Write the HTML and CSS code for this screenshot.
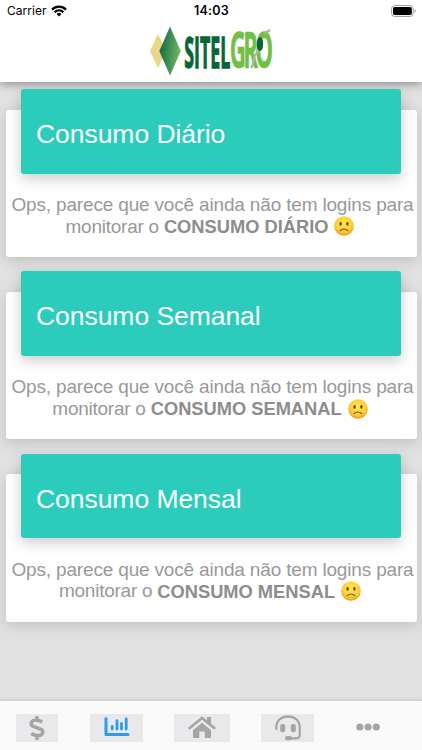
FILE: index.html
```html
<!DOCTYPE html>
<html lang="pt-BR">
<head>
<meta charset="utf-8">
<meta name="viewport" content="width=device-width, initial-scale=1">
<title>SITELGRO</title>
<link rel="stylesheet" href="styles.css">
</head>
<body>
<div class="app">
  <header class="header">
    <div class="status">
      <div class="carrier"><span>Carrier</span>
        <svg width="16" height="12" viewBox="0 0 16 12"><g fill="none" stroke="#000" stroke-width="2.2"><path d="M1 4.6C5 .7 11 .7 15 4.6"/><path d="M3.6 7.3C6.2 4.8 9.8 4.8 12.4 7.3"/></g><path d="M5.5 9C7 7.7 9 7.7 10.5 9L8 11.5Z"/></svg>
      </div>
      <div class="time">14:03</div>
      <svg class="battery" width="26" height="12" viewBox="0 0 26 12"><rect x=".6" y=".6" width="21.6" height="10.8" rx="3" fill="#fff" stroke="#999"/><rect x="2" y="2" width="18.8" height="8" rx="1.7"/><path d="M23.5 4.2Q24.8 5 24.8 6T23.5 7.8Z" fill="#999"/></svg>
    </div>
    <svg class="logo" width="132" height="58" viewBox="0 0 132 58">
      <defs><linearGradient id="leaf" x1="0" y1=".4" x2="1" y2=".6"><stop offset="0" stop-color="#146b40"/><stop offset=".35" stop-color="#338652"/><stop offset="1" stop-color="#7db861"/></linearGradient></defs>
      <path d="M5 29L13 12L21 29L13 46Z" fill="#e8d786"/>
      <path d="M14.3 29L25 4.5L35.8 29L25 53.5Z" fill="url(#leaf)"/>
      <text class="logo-dark" transform="translate(39.3 46.3) scale(1 1.6)" textLength="46" lengthAdjust="spacingAndGlyphs">SITEL</text>
      <text class="logo-light" transform="translate(84.8 45.6) scale(.83 1.85)">GRO</text>
      <path d="M106 46Q109 42 109.5 34L114 28M119 12L125 8" fill="none" stroke="#abb0a8" stroke-width="2.2"/>
      <ellipse cx="115" cy="22" rx="3.2" ry="7" fill="#066637"/>
    </svg>
  </header>
  <main class="content">
    <section class="card">
      <h2 class="card-title">Consumo Diário</h2>
      <p class="message"><span class="line first">Ops, parece que você ainda não tem logins para</span><span class="line"><span class="lead">monitorar o</span> <b>CONSUMO DIÁRIO</b> <svg class="face" viewBox="0 0 20 20"><use href="#sad"/></svg></span></p>
    </section>
    <section class="card">
      <h2 class="card-title">Consumo Semanal</h2>
      <p class="message"><span class="line first">Ops, parece que você ainda não tem logins para</span><span class="line"><span class="lead">monitorar o</span> <b>CONSUMO SEMANAL</b> <svg class="face" viewBox="0 0 20 20"><use href="#sad"/></svg></span></p>
    </section>
    <section class="card">
      <h2 class="card-title">Consumo Mensal</h2>
      <p class="message"><span class="line first">Ops, parece que você ainda não tem logins para</span><span class="line"><span class="lead">monitorar o</span> <b>CONSUMO MENSAL</b> <svg class="face" viewBox="0 0 20 20"><use href="#sad"/></svg></span></p>
    </section>
  </main>
  <nav class="tabs">
    <a class="tab money"><svg width="16" height="26" viewBox="0 0 16 26"><path d="M8 1V5M8 21V25" stroke="#a5a5a5" stroke-width="3.4"/><path d="M13.4 6.9Q8.8 4.7 5.2 5.4C1.6 6.2 1.2 10 4.4 11.4L11.4 14C15.2 15.7 14.1 19.8 10.4 20.4Q6 21 2.3 18.5" fill="none" stroke="#a5a5a5" stroke-width="3.5"/></svg></a>
    <a class="tab chart"><svg width="26" height="20" viewBox="0 0 26 20"><g fill="none" stroke="#2b9df0" stroke-linecap="round"><path d="M2 1.6V17.4H24" stroke-width="3" stroke-linejoin="round"/><path d="M8.2 9.5V12M13 3.7V12M17.5 6.4V12M22.2 2V12" stroke-width="2.8"/></g></svg></a>
    <a class="tab home"><svg width="28" height="23" viewBox="0 0 28 23"><path d="M19 1H23V9L19 6Z" fill="#a5a5a5"/><path d="M1.7 12L14 2L26.3 12" fill="none" stroke="#a5a5a5" stroke-width="2.7" stroke-linecap="round" stroke-linejoin="round"/><path d="M5 14.2L14 6.8L23 14.2V21Q23 22 22 22H16.8V15.5H11.3V22H6Q5 22 5 21Z" fill="#a5a5a5"/></svg></a>
    <a class="tab support"><svg width="26" height="26" viewBox="0 0 26 26"><path d="M1.3 14V12.5C1.3 -2.3 24.7 -2.3 24.7 12.5V20Q24.7 23.3 21.4 23.3H13" fill="none" stroke="#a5a5a5" stroke-width="2.2" stroke-linecap="round"/><rect x="5.2" y="9" width="5" height="8.2" rx="2" fill="#a5a5a5"/><rect x="15.8" y="9" width="5" height="8.2" rx="2" fill="#a5a5a5"/><rect x="10" y="21" width="7" height="4.3" rx="2.1" fill="#a5a5a5"/></svg></a>
    <a class="more"><svg width="24" height="8" viewBox="0 0 24 8" fill="#a5a5a5"><circle cx="3.8" cy="4" r="3.6"/><circle cx="12" cy="4" r="3.6"/><circle cx="20.3" cy="4" r="3.6"/></svg></a>
  </nav>
</div>
<svg class="symbols" width="0" height="0">
  <defs>
    <radialGradient id="skin" cx=".5" cy=".38" r=".62"><stop offset="0" stop-color="#ffe64f"/><stop offset=".65" stop-color="#ffd03a"/><stop offset="1" stop-color="#f09a1d"/></radialGradient>
    <g id="sad"><circle cx="10" cy="10" r="9.8" fill="url(#skin)"/><ellipse cx="6.6" cy="7.8" rx="1.2" ry="1.9" fill="#694514"/><ellipse cx="13.4" cy="7.8" rx="1.2" ry="1.9" fill="#694514"/><path d="M6.2 14.7Q10 11.4 13.8 14.7" fill="none" stroke="#694514" stroke-width="1.1" stroke-linecap="round"/></g>
  </defs>
</svg>
</body>
</html>
```
FILE: styles.css
```css
* { box-sizing: border-box; }
body { margin: 0; font-family: "Liberation Sans", Arial, sans-serif; background: #e1e1e1; }
.symbols { position: absolute; }
.app { width: 422px; height: 750px; display: flex; flex-direction: column; overflow: hidden; }
.header { height: 82px; flex: none; background: #fff; box-shadow: 0 2px 9px rgba(0,0,0,.38); }
.status { height: 22px; display: grid; grid-template-columns: 1fr auto 1fr; align-items: center; padding: 0 6px 0 7px; }
.carrier { display: flex; align-items: center; gap: 5px; font: 12px/22px Inter, sans-serif; letter-spacing: .02px; }
.time { font: 600 12.5px/22px Inter, sans-serif; letter-spacing: .2px; }
.battery { justify-self: end; margin-right: -1px; }
.logo { display: block; margin-left: 145px; overflow: visible; }
.logo-dark { font: 700 27px "Open Sans", sans-serif; fill: #066637; stroke: #066637; stroke-width: .8px; }
.logo-light { font: 700 27px "Open Sans", sans-serif; letter-spacing: -3.3px; fill: #71bf48; stroke: #71bf48; stroke-width: .3px; }
.content { flex: 1; padding: 27.5px 5.5px 0; display: flex; flex-direction: column; gap: 34.8px; }
.card { height: 147.5px; flex: none; background: #fff; border-radius: 3px; box-shadow: 0 3px 14px rgba(0,0,0,.16); }
.card-title { height: 84.5px; margin: -20.5px 15.5px 0; padding-left: 15px; border-radius: 3px; background: #2bccbb; box-shadow: 0 5px 14px rgba(0,0,0,.2); color: #fff; font-size: 26.5px; line-height: 90px; font-weight: 400; letter-spacing: -.05px; }
.message { margin: 20.5px 0 0; color: #999; font-size: 19px; line-height: 21.5px; text-align: center; }
.line { display: flex; justify-content: center; align-items: center; gap: 5px; height: 21.5px; white-space: nowrap; }
.first { letter-spacing: -.17px; padding-left: 3px; }
.lead { letter-spacing: -.25px; }
.message b { font-size: 18.3px; color: #8d8d8d; }
.line b { position: relative; top: .5px; }
.lead { margin-left: -2px; }
.face { width: 20px; height: 20px; flex: none; margin-left: 1px; }
.tabs { height: 50px; flex: none; background: #fafafa; border-top: 1px solid #d2d2d2; display: flex; align-items: flex-start; padding: 13px 0 0 16px; box-shadow: 0 -1px 3px rgba(0,0,0,.07); }
.tab { height: 28px; background: #e9e9eb; display: flex; align-items: center; justify-content: center; }
.money { width: 42px; margin-right: 32px; }
.chart { width: 53px; margin-right: 31px; }
.chart svg { margin-top: -2px; }
.home { width: 56px; margin-right: 31px; }
.home svg { margin-top: -1px; margin-left: -1px; }
.support { width: 53px; margin-right: 42px; }
.more { height: 26px; display: flex; align-items: center; }
```
